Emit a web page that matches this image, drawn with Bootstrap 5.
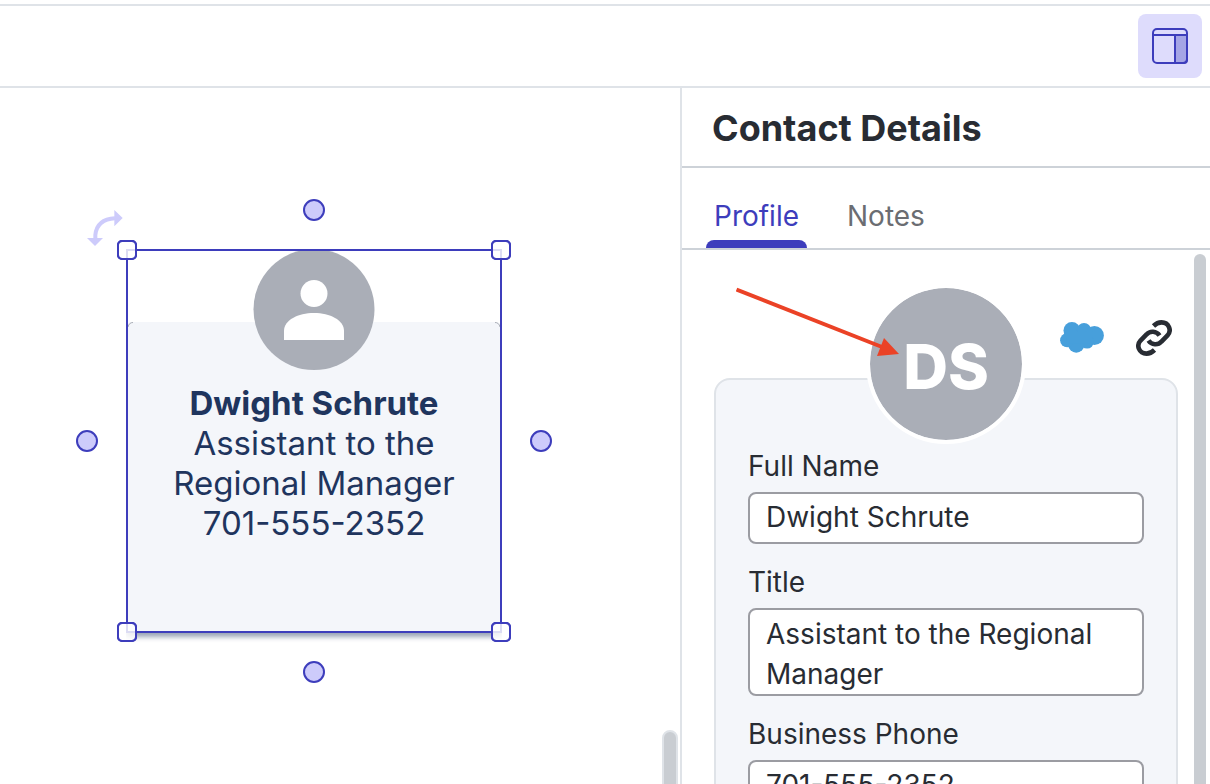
<!DOCTYPE html>
<html lang="en">
<head>
<meta charset="utf-8">
<meta name="viewport" content="width=device-width, initial-scale=1">
<title>Contact Details</title>
<link href="https://cdn.jsdelivr.net/npm/bootstrap@5.3.0/dist/css/bootstrap.min.css" rel="stylesheet">
<style>
:root { --accent: #3d3dbc; --lilac: #cdcbfb; --ink: #282c33; --rule: #dfe3e8; --avatar: #aaaeb7; --fill: #f4f6fa; }
body { font-family: Inter, "Liberation Sans", sans-serif; color: var(--ink); background: #fff; }
.topbar { margin-top: 4px; height: 84px; border-top: 2px solid var(--rule); border-bottom: 2px solid var(--rule); }
.panel-toggle { width: 64px; height: 64px; border-radius: 8px; background: #dedcfc; }
.panel-toggle:hover { background: #d2cffa; }

/* Drawing canvas */
.shape { position: absolute; left: 126px; top: 161px; width: 376px; height: 384px; color: #1f355e; }
.shape-body { position: absolute; inset: 73px 0 1px; background: var(--fill); border-radius: 6px 6px 0 0; box-shadow: 0 5px 5px rgba(31,53,94,.45); clip-path: inset(0 0 -12px 0); padding-top: 61px; }
.shape-corners { position: absolute; left: 0; top: 72px; }
.shape-avatar { position: absolute; left: 127px; top: 0; }
.shape-text { font-size: 33px; line-height: 40px; }
.selection { position: absolute; inset: 0; border: 2px solid var(--accent); }
.grip { position: absolute; width: 20px; height: 20px; border: 2px solid var(--accent); border-radius: 5px; background: rgba(255,255,255,.82); background-clip: padding-box; }
/* the corner of the outline shows faintly inside each grip */
.grip::after { content: ""; position: absolute; inset: -2px; border-radius: 5px; border: 2px solid var(--accent); }
.grip-nw { left: -9px; top: -9px; } .grip-ne { right: -9px; top: -9px; }
.grip-sw { left: -9px; bottom: -9px; } .grip-se { right: -9px; bottom: -9px; }
.port { position: absolute; width: 22px; height: 22px; border: 2px solid var(--accent); border-radius: 50%; background: var(--lilac); }
.port-n { left: 177px; top: -50px; } .port-s { left: 177px; bottom: -50px; }
.port-w { left: -50px; top: 181px; } .port-e { right: -50px; top: 181px; }
.rotate { position: absolute; left: -39px; top: -39px; }
.canvas-scroll { position: absolute; right: 2px; bottom: -2px; width: 16px; height: 56px; border: 2px solid var(--rule); border-radius: 8px 8px 0 0; background: #c9cdd2; }

/* Details panel */
.details { width: 530px; border-left: 2px solid var(--rule); }
.details-head { height: 80px; padding: 2px 0 0 30px; border-bottom: 2px solid #cdd2d8; }
.details-head h1 { font-size: 36px; line-height: 40px; font-weight: 700; }
.tabs { height: 82px; padding-left: 24px; gap: 32px; border-bottom: 2px solid #cdd2d8; font-size: 28px; line-height: 40px; }
.tabs a { padding: 28px 8px 0; color: #6b6d72; text-decoration: none; display: flex; flex-direction: column; justify-content: space-between; }
.tabs a::after { content: ""; height: 8px; margin: 0 -8px; border-radius: 8px 8px 0 0; }
.tabs a.active { color: var(--accent); }
.tabs a.active::after { background: var(--accent); }
.profile { padding: 128px 32px 0; }
.profile-card { border: 2px solid var(--rule); border-radius: 16px; background: var(--fill); padding: 64px 32px 32px; }
.initials { position: absolute; left: 50%; top: -96px; width: 160px; height: 160px; margin-left: -80px; padding-top: 4px; border: 4px solid #fff; border-radius: 50%; background: var(--avatar); background-clip: padding-box; color: #fff; font-size: 62px; font-weight: 800; }
.card-links { position: absolute; right: 4px; top: -60px; gap: 32px; }
.field-label { display: block; font-size: 28px; line-height: 44px; margin-bottom: 4px; }
.field { font-size: 28px; line-height: 40px; color: var(--ink); border: 2px solid #9b9ca2; border-radius: 8px; padding: 4px 16px 0; resize: none; overflow: hidden; }
.field:focus { color: var(--ink); }
input.field { height: 52px; padding: 3px 16px 5px; }
.callout-arrow { position: absolute; left: 54px; top: 37px; }
.panel-scroll { position: absolute; right: 4px; top: 4px; bottom: 0; width: 12px; border-radius: 6px 6px 0 0; background: #c9cdd2; }
</style>
</head>
<body>
<div class="d-flex flex-column vh-100 overflow-hidden">
  <header class="topbar d-flex align-items-center justify-content-end px-2 flex-shrink-0">
    <button type="button" class="panel-toggle btn border-0 p-0 d-flex align-items-center justify-content-center" aria-label="Toggle details panel">
      <svg width="36" height="36" viewBox="0 0 36 36" fill="none" stroke="#3d3dbc" stroke-width="2"><path d="M23 7h12v25a3 3 0 0 1-3 3h-9z" fill="#a5a5e5"/><rect x="1" y="1" width="34" height="34" rx="4"/><path d="M1 7h34"/></svg>
    </button>
  </header>

  <div class="d-flex flex-grow-1 overflow-hidden">
    <main class="flex-grow-1 position-relative overflow-hidden">
      <div class="shape text-center">
        <div class="shape-body">
          <div class="shape-text"><strong>Dwight Schrute</strong><br>Assistant to the<br>Regional Manager<br>701-555-2352</div>
        </div>
        <svg class="shape-corners" width="376" height="10" viewBox="0 0 376 10" fill="none" stroke="#aaaeb7"><path d="M2 6Q3 1.500 7 1.500M374 6Q373 1.500 369 1.500"/></svg>
        <svg class="shape-avatar" width="122" height="122" viewBox="0 0 122 122"><circle cx="61" cy="60.500" r="60.500" fill="#aaaeb7"/><circle cx="61" cy="44.500" r="13.500" fill="#fff"/><path d="M31 91V82C31 71 45 64 61 64S91 71 91 82V91Z" fill="#fff"/></svg>
        <div class="selection"></div>
        <span class="grip grip-nw"></span><span class="grip grip-ne"></span><span class="grip grip-sw"></span><span class="grip grip-se"></span>
        <span class="port port-n"></span><span class="port port-e"></span><span class="port port-s"></span><span class="port port-w"></span>
        <svg class="rotate" width="36" height="36" viewBox="50 60 108 108"><path d="M75 146V135Q80 88 134 85" fill="none" stroke="#cdcbfb" stroke-width="12"/><path d="M132 60l25 24-25 25zM50 144h48l-24 24z" fill="#cdcbfb"/></svg>
      </div>
      <div class="canvas-scroll"></div>
    </main>

    <aside class="details d-flex flex-column flex-shrink-0">
      <div class="details-head d-flex align-items-center flex-shrink-0"><h1 class="m-0">Contact Details</h1></div>
      <nav class="tabs d-flex flex-shrink-0" aria-label="Contact sections">
        <a href="#profile" class="active" aria-current="page">Profile</a>
        <a href="#notes">Notes</a>
      </nav>
      <section id="profile" class="profile position-relative flex-grow-1 overflow-hidden">
        <form class="profile-card position-relative">
          <div class="initials d-flex align-items-center justify-content-center">DS</div>
          <div class="card-links d-flex align-items-center">
            <a href="#salesforce" aria-label="Open in Salesforce" class="d-flex"><svg width="44" height="32" viewBox="60 66 130 95" fill="#479fdb"><circle cx="95" cy="91" r="25"/><circle cx="131" cy="90" r="21"/><circle cx="162" cy="106" r="28"/><circle cx="140" cy="125" r="20"/><circle cx="108" cy="133" r="24"/><circle cx="81" cy="120" r="21"/><path d="M75 95h80v35H80z"/></svg></a>
            <a href="#link" aria-label="Copy link" class="d-flex"><svg width="36" height="36" viewBox="0 0 36 36" fill="none" stroke="#282c33" stroke-width="4.600"><path d="M17.500 6C20 3.500 23 2.400 25.500 2.400C33 2.400 36 10.500 31.500 15.500L25.500 21.500C22 25.500 15.500 25 12.500 20.500"/><path d="M18.500 30C16 32.500 13 33.600 10.500 33.600C3 33.600 0 25.500 4.500 20.500L10.500 14.500C14 10.500 20.500 11 23.500 15.500"/></svg></a>
          </div>
          <div class="mb-3"><label class="field-label" for="name">Full Name</label><input class="field form-control" id="name" type="text" value="Dwight Schrute"></div>
          <div class="mb-3"><label class="field-label" for="title">Title</label><textarea class="field form-control d-block" id="title" rows="2">Assistant to the Regional Manager</textarea></div>
          <div><label class="field-label" for="phone">Business Phone</label><input class="field form-control" id="phone" type="tel" value="701-555-2352"></div>
        </form>
        <svg class="callout-arrow" width="166" height="72" viewBox="0 0 166 72"><path d="M.5 2.500L146 60" stroke="#eb4226" stroke-width="4"/><path d="M163 67l-15-16-7 18z" fill="#eb4226"/></svg>
        <div class="panel-scroll"></div>
      </section>
    </aside>
  </div>
</div>
<script src="https://cdn.jsdelivr.net/npm/bootstrap@5.3.0/dist/js/bootstrap.bundle.min.js"></script>
</body>
</html>
